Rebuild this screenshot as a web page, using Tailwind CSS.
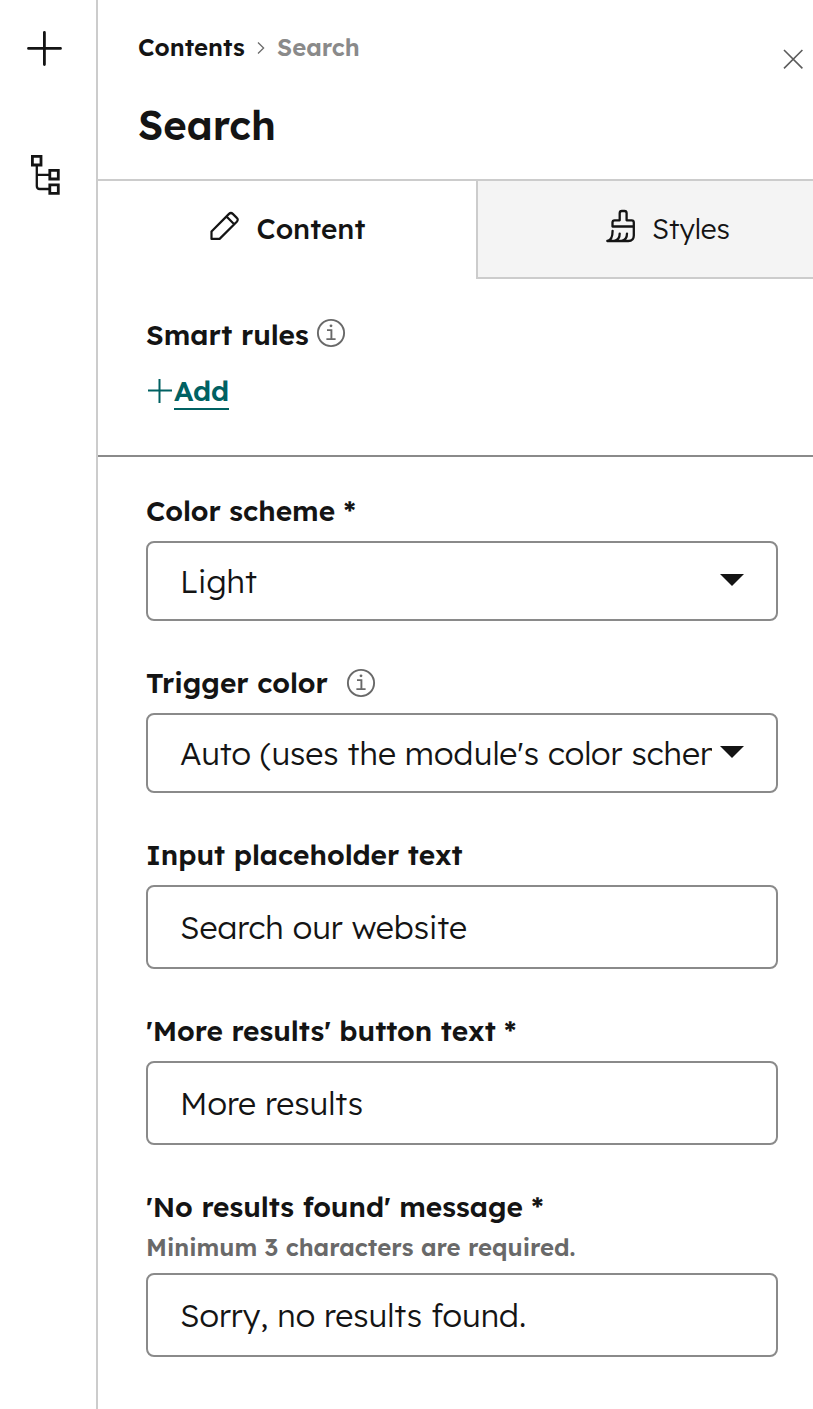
<!DOCTYPE html>
<html lang="en">
<head>
    <meta charset="UTF-8">
    <meta name="viewport" content="width=device-width, initial-scale=1.0">
    <title>Search</title>
    <script src="https://cdn.jsdelivr.net/npm/@tailwindcss/browser@4"></script>
</head>
<body class="h-[1409px] flex overflow-hidden bg-white text-[#141414] font-['Lexend_Deca','Lexend','Inter',sans-serif]">
  <!-- Sidebar -->
  <nav class="w-[98px] shrink-0 border-r-2 border-[#cccccc] pt-7 pl-6 flex flex-col">
    <button class="block w-10 h-10" aria-label="Add">
      <svg class="w-10 h-10" viewBox="0 0 40 40" fill="none" stroke="currentColor" stroke-width="2.8" stroke-linecap="round"><path d="M20.4 4.5v32M4.5 20.4h32"/></svg>
    </button>
    <button class="block w-10 h-12 mt-21" aria-label="Contents">
      <svg class="w-10 h-12" viewBox="0 0 40 48" fill="none" stroke="currentColor" stroke-width="2.8"><path d="M8.4 4.4h8.6v8.6H8.4zM25.8 18.4h8.5v8.6h-8.5zM25.8 32.8h8.5v8.6h-8.5z"/><path stroke-width="2.3" d="M12.8 13v21q0 3 3 3h9.5M12.8 22.9h12.5"/></svg>
    </button>
  </nav>

  <main class="flex-1 min-w-0">
    <!-- Header -->
    <header class="h-[181px] border-b-2 border-[#cccccc] pl-10 pr-[10px] flex justify-between">
      <div class="pt-8">
        <div class="h-8 flex items-center whitespace-nowrap text-2xl font-semibold">
          <span class="w-[119px] pb-0.5">Contents</span>
          <svg class="w-2 h-3.5 mr-3" viewBox="0 0 8 14" fill="none" stroke="#6b6b6b" stroke-width="1.3"><path d="M1 1.5 6.6 7 1 12.5"/></svg>
          <span class="text-[#8a8a8a] pb-0.5">Search</span>
        </div>
        <h1 class="mt-9 h-[52px] leading-[50px] text-[40px] font-semibold">Search</h1>
      </div>
      <button class="mt-[49px] h-5 w-5" aria-label="Close">
        <svg class="w-5 h-5" viewBox="0 0 20 20" fill="none" stroke="#5c5c5c" stroke-width="1.6"><path d="m1 1 18.4 18.4M19.4 1 1 19.4"/></svg>
      </button>
    </header>

    <!-- Tabs -->
    <div class="flex h-[98px] text-[28px]">
      <button class="w-[378px] shrink-0 flex items-center pl-[111px] pb-0.5 font-medium">
        <svg class="w-8 h-8 mr-[15.5px] -mt-1.5" viewBox="0 0 32 32" fill="none" stroke="currentColor" stroke-width="2.2" stroke-linejoin="round"><path d="M2.5 28.9v-7.4L20 3.9q1.9-1.8 3.8 0l4 4q1.9 1.8 0 3.8L10.6 28.9zM17.5 6.4l7.7 7.8"/></svg>
        <span>Content</span>
      </button>
      <button class="flex-1 flex items-center pl-[127px] bg-[#f4f4f4] border-l-2 border-b-2 border-[#cccccc] font-light">
        <svg class="w-8 h-[34px] mr-[15px] -mt-1.5 shrink-0" viewBox="0 0 32 34" fill="none" stroke="currentColor" stroke-width="2.3" stroke-linejoin="round" stroke-linecap="round"><path d="M7.5 17.5v-4q0-2.2 2.2-2.2h5V4.2q0-2.2 2.2-2.2h2.5q2.2 0 2.2 2.2v7.1h5q2.2 0 2.2 2.2v13q0 5.5-5.5 5.5H2.3q5.3-.5 5.3-10.2M7.5 17.5h21.3M9.2 32q5.5-.8 5.5-7.4M16.5 32q5.5-.8 5.5-7.4"/></svg>
        <span>Styles</span>
      </button>
    </div>

    <!-- Smart rules -->
    <section class="h-[178px] border-b-2 border-[#8a8a8a] pl-12 pt-9">
      <div class="flex items-center h-10 text-[28px] font-semibold">
        <span class="w-[170px] whitespace-nowrap">Smart rules</span>
        <svg class="w-[30px] h-[30px] -mt-1" viewBox="0 0 30 30" fill="none" stroke="#696969" stroke-width="1.9"><circle cx="15" cy="15" r="13.1"/><path d="M11 12.1h4.4v8.9M10.4 21.1h9.2"/><circle cx="15" cy="7.8" r="1.4" fill="#696969" stroke="none"/></svg>
      </div>
      <button class="mt-4 h-10 flex items-center text-[28px] font-semibold text-[#006162]">
        <svg class="w-[28px] h-7" viewBox="0 0 28 28" fill="none" stroke="currentColor" stroke-width="2"><path d="M13.5 2v24M2 13.5h24"/></svg>
        <span class="h-[37px] leading-[35px] border-b-2 border-[#006162]">Add</span>
      </button>
    </section>

    <!-- Fields -->
    <form class="pl-12 pr-[35px] pt-6 flex flex-col gap-8">
      <div>
        <label class="h-[60px] flex items-center text-[28px] font-semibold whitespace-nowrap">Color scheme *</label>
        <div class="h-20 border-2 border-[#8a8a8a] rounded-lg pl-8 pr-8 flex items-center justify-between text-[32px] font-light">
          <span>Light</span>
          <svg class="w-6 h-3 -mt-0.5 shrink-0" viewBox="0 0 24 12" fill="currentColor"><path d="M0 0h24L12 12z"/></svg>
        </div>
      </div>
      <div>
        <label class="h-[60px] flex items-center text-[28px] font-semibold whitespace-nowrap">
          <span class="w-[200px]">Trigger color</span>
          <svg class="w-[30px] h-[30px]" viewBox="0 0 30 30" fill="none" stroke="#696969" stroke-width="1.9"><circle cx="15" cy="15" r="13.1"/><path d="M11 12.1h4.4v8.9M10.4 21.1h9.2"/><circle cx="15" cy="7.8" r="1.4" fill="#696969" stroke="none"/></svg>
        </label>
        <div class="h-20 border-2 border-[#8a8a8a] rounded-lg pl-8 pr-8 flex items-center justify-between text-[32px] font-light">
          <span class="w-[532px] overflow-hidden whitespace-nowrap">Auto (uses the module's color scheme)</span>
          <svg class="w-6 h-3 -mt-0.5 shrink-0" viewBox="0 0 24 12" fill="currentColor"><path d="M0 0h24L12 12z"/></svg>
        </div>
      </div>
      <div>
        <label class="h-[60px] flex items-center text-[28px] font-semibold whitespace-nowrap">Input placeholder text</label>
        <div class="h-[84px] border-2 border-[#8a8a8a] rounded-lg pl-8 flex items-center text-[32px] font-light">Search our website</div>
      </div>
      <div>
        <label class="h-[60px] flex items-center text-[28px] font-semibold whitespace-nowrap">'More results' button text *</label>
        <div class="h-[84px] border-2 border-[#8a8a8a] rounded-lg pl-8 flex items-center text-[32px] font-light">More results</div>
      </div>
      <div>
        <label class="h-[60px] flex items-center text-[28px] font-semibold whitespace-nowrap">'No results found' message *</label>
        <p class="h-9 leading-5 text-[24px] font-semibold text-[#696969] whitespace-nowrap">Minimum 3 characters are required.</p>
        <div class="h-[84px] border-2 border-[#8a8a8a] rounded-lg pl-8 flex items-center text-[32px] font-light">Sorry, no results found.</div>
      </div>
    </form>
  </main>
</body>
</html>
